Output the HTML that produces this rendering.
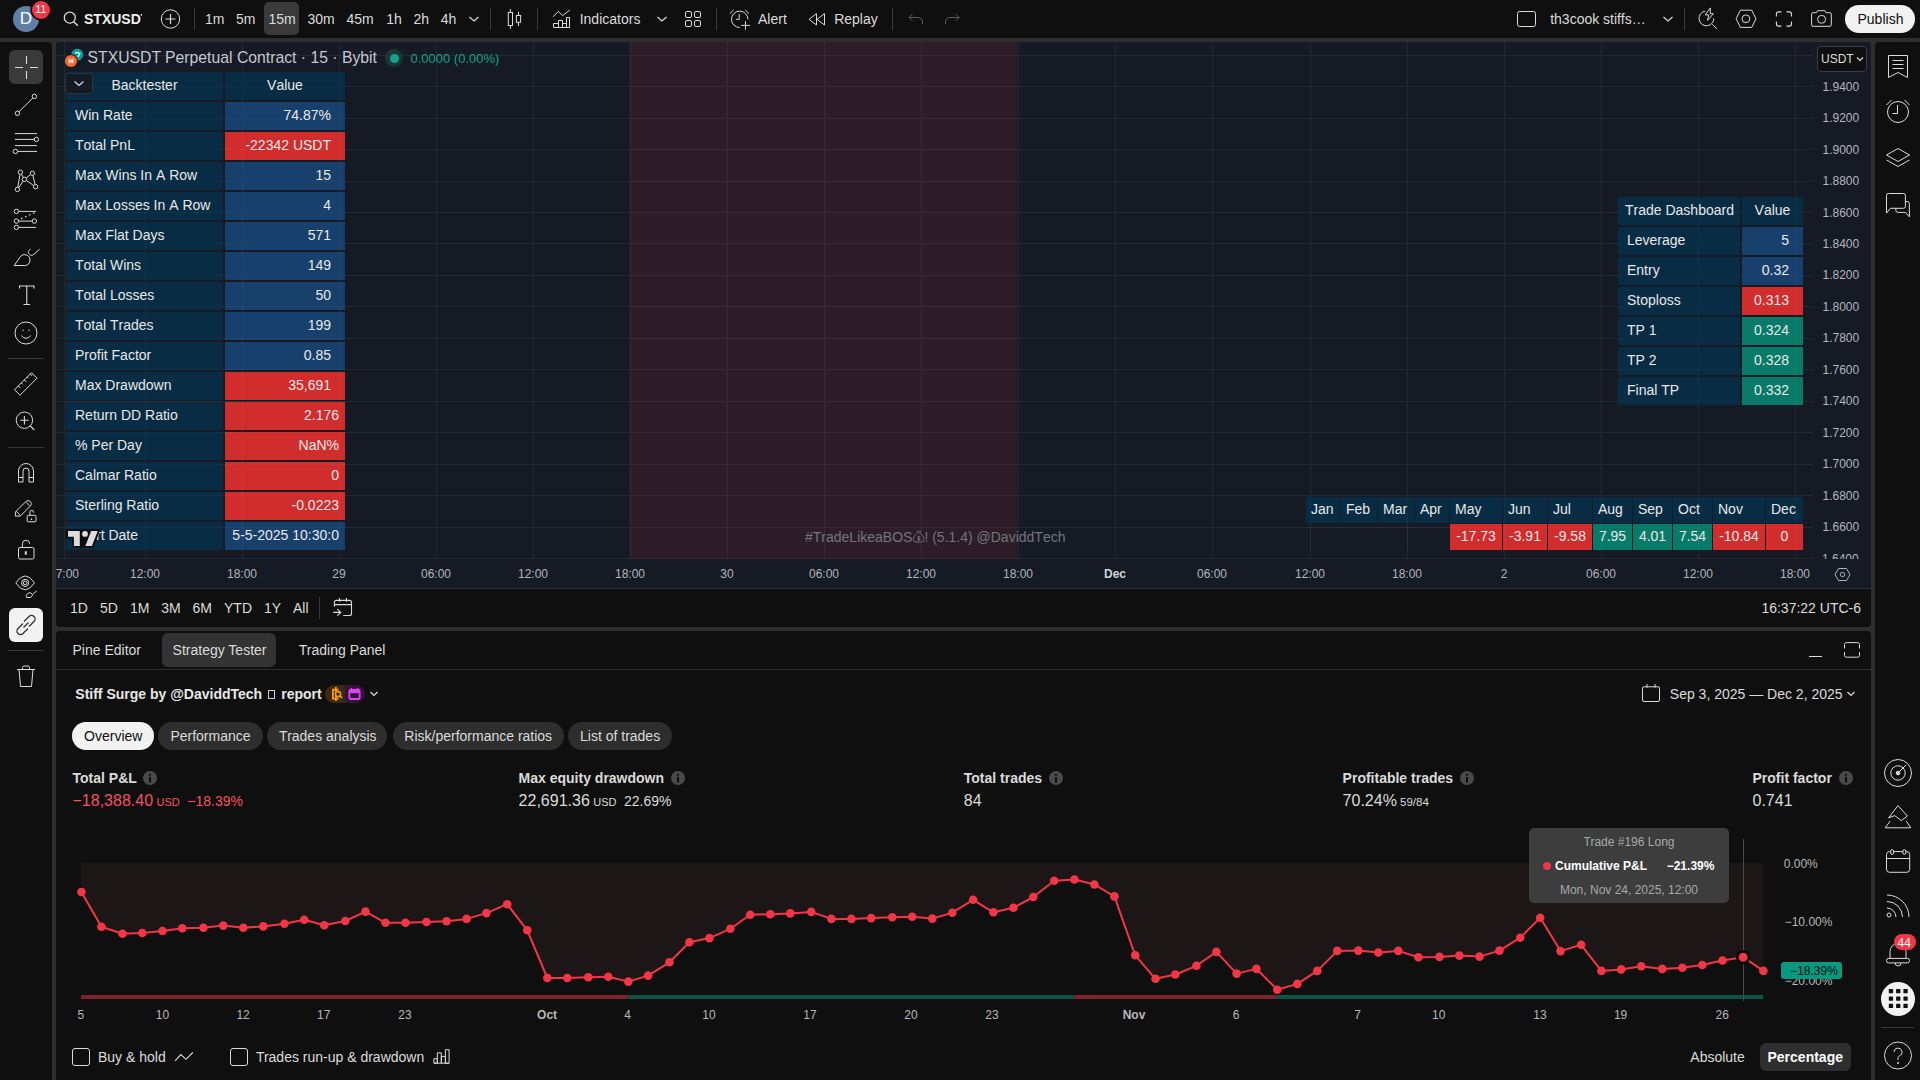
<!DOCTYPE html>
<html><head><meta charset="utf-8">
<style>
*{margin:0;padding:0;box-sizing:border-box}
html,body{width:1920px;height:1080px;overflow:hidden;background:#2e2e2e;font-family:"Liberation Sans",sans-serif;color:#dbdbdb}
.a{position:absolute}
.t{position:absolute;white-space:nowrap;line-height:1}
svg{position:absolute;overflow:visible}
.ic{fill:none;stroke:#dbdbdb;stroke-width:1}
</style></head><body>
<div class="a" style="left:0px;top:0px;width:1920px;height:38px;background:#0f0f0f;"></div>
<div class="a" style="left:12.8px;top:5.8px;width:26.4px;height:26.4px;border-radius:50%;background:#5f7fa6"></div>
<div class="t" style="left:19.7px;top:10.41px;font-size:17px;color:#ffffff;">D</div>
<div class="a" style="left:32.2px;top:0.8px;width:18px;height:18px;border-radius:50%;background:#f23645;box-shadow:0 0 0 1.6px #0f0f0f"></div>
<div class="t" style="left:35.3px;top:3.59px;font-size:11px;color:#ffffff;letter-spacing:-0.3px">11</div>
<svg class="ic" style="left:60px;top:10px;" width="20" height="20" viewBox="0 0 20 20"><circle cx="9.8" cy="7.7" r="5.5" stroke-width="1.3"/><path d="M13.8 11.8l4 3.9" stroke-width="1.4"/></svg>
<div class="a" style="left:84px;top:6px;width:58px;height:26px;overflow:hidden"><div class="t" style="left:0px;top:6.15px;font-size:14px;color:#f0f0f0;font-weight:700;">STXUSDT</div>
</div>
<svg class="ic" style="left:160px;top:9px;" width="22" height="22" viewBox="0 0 22 22"><circle cx="10.5" cy="10" r="9.2"/><path d="M10.5 5v10M5.5 10h10" stroke-width="1.2"/></svg>
<div class="a" style="left:194px;top:8px;width:1px;height:22px;background:#3a3a3a;"></div>
<div class="a" style="left:264px;top:2px;width:35px;height:33px;background:#3a3a3a;border-radius:5px;"></div>
<div class="t" style="left:205px;top:12.45px;font-size:14px;color:#dbdbdb;">1m</div>
<div class="t" style="left:236px;top:12.45px;font-size:14px;color:#dbdbdb;">5m</div>
<div class="t" style="left:268.5px;top:12.45px;font-size:14px;color:#dbdbdb;">15m</div>
<div class="t" style="left:307.5px;top:12.45px;font-size:14px;color:#dbdbdb;">30m</div>
<div class="t" style="left:346.5px;top:12.45px;font-size:14px;color:#dbdbdb;">45m</div>
<div class="t" style="left:386.3px;top:12.45px;font-size:14px;color:#dbdbdb;">1h</div>
<div class="t" style="left:413.4px;top:12.45px;font-size:14px;color:#dbdbdb;">2h</div>
<div class="t" style="left:440.7px;top:12.45px;font-size:14px;color:#dbdbdb;">4h</div>
<svg class="ic" style="left:468px;top:15px;" width="12" height="8" viewBox="0 0 12 8"><path d="M1.5 2l4.5 4 4.5-4" stroke-width="1.2"/></svg>
<div class="a" style="left:490px;top:8px;width:1px;height:22px;background:#3a3a3a;"></div>
<svg class="ic" style="left:505px;top:8px;" width="20" height="22" viewBox="0 0 20 22"><rect x="3.3" y="4.4" width="4.2" height="13.1"/><rect x="11.4" y="7.5" width="4.2" height="6.8"/><path d="M5.4 1v3.4M5.4 17.5v3.3M13.5 3.9v3.6M13.5 14.3V18"/></svg>
<div class="a" style="left:537px;top:8px;width:1px;height:22px;background:#3a3a3a;"></div>
<svg class="ic" style="left:550px;top:8px;" width="24" height="22" viewBox="0 0 24 22"><path d="M3.1 8.8L8.3 3.4l4.2 4.2 7.3-5.5"/><path d="M3.5 19.5V15.5H8.5V19.5M8.5 19.5V12.5H12.5V19.5M12.5 19.5V15.5H16.5V19.5M16.5 19.5V9.5H19.5V19.5ZM3.5 19.5H19.5"/></svg>
<div class="t" style="left:579.7px;top:12.45px;font-size:14px;color:#dbdbdb;">Indicators</div>
<svg class="ic" style="left:656px;top:15px;" width="12" height="8" viewBox="0 0 12 8"><path d="M1.5 2l4.5 4 4.5-4" stroke-width="1.2"/></svg>
<svg class="ic" style="left:684px;top:10px;" width="20" height="20" viewBox="0 0 20 20"><rect x="1.5" y="1.5" width="6" height="6" rx="1.5"/><rect x="10.5" y="1.5" width="6" height="6" rx="1.5"/><rect x="1.5" y="10.5" width="6" height="6" rx="1.5"/><rect x="10.5" y="10.5" width="6" height="6" rx="1.5"/></svg>
<div class="a" style="left:716px;top:8px;width:1px;height:22px;background:#3a3a3a;"></div>
<svg class="ic" style="left:728px;top:8px;" width="24" height="24" viewBox="0 0 24 24"><path d="M19.9 11.3A8.2 8.2 0 1 0 11.7 19.5"/><path d="M11.2 6.2V11.3H7.9M1.8 5.7L5.6 2M17.3 2L21 5.7M17.5 13.2V21.6M13.1 17.4H22"/></svg>
<div class="t" style="left:758px;top:12.45px;font-size:14px;color:#dbdbdb;">Alert</div>
<svg class="ic" style="left:806px;top:12px;" width="20" height="16" viewBox="0 0 20 16"><path d="M10.5 1.7L3 7.3 10.5 13ZM18.5 1.7L11 7.3 18.5 13Z"/></svg>
<div class="t" style="left:834.2px;top:12.45px;font-size:14px;color:#dbdbdb;">Replay</div>
<div class="a" style="left:892px;top:8px;width:1px;height:22px;background:#3a3a3a;"></div>
<svg class="ic" style="left:906px;top:12px;" width="18" height="14" viewBox="0 0 18 14"><path d="M3 5.5h9a4.5 4.5 0 0 1 4.5 4.5v2M6.5 2L3 5.5 6.5 9" stroke="#5d5d5d"/></svg>
<svg class="ic" style="left:944px;top:12px;" width="18" height="14" viewBox="0 0 18 14"><path d="M15 5.5H6a4.5 4.5 0 0 0-4.5 4.5v2M11.5 2L15 5.5 11.5 9" stroke="#5d5d5d"/></svg>
<div class="a" style="left:1517px;top:11px;width:19px;height:16px;border:1.2px solid #dbdbdb;border-radius:2.5px"></div>
<div class="t" style="left:1550.2px;top:12.45px;font-size:14px;color:#dbdbdb;">th3cook stiffs…</div>
<svg class="ic" style="left:1662px;top:15px;" width="12" height="8" viewBox="0 0 12 8"><path d="M1.5 2l4.5 4 4.5-4" stroke-width="1.2"/></svg>
<div class="a" style="left:1684px;top:8px;width:1px;height:22px;background:#3a3a3a;"></div>
<svg class="ic" style="left:1697px;top:7px;" width="22" height="23" viewBox="0 0 22 23"><path d="M8.1 4.1A7.4 7.4 0 1 0 16.8 11.4"/><path d="M13.3 .9L8.2 7.9h3.5l-1.1 5.5 5.8-6.7h-3.1z"/><path d="M15.3 17.3l4.7 4.7"/></svg>
<svg class="ic" style="left:1735px;top:9px;" width="22" height="20" viewBox="0 0 22 20"><path d="M1.1 9.8L5.4 1.2H16.7L21 9.8 16.7 18.4H5.4z"/><circle cx="10.9" cy="9.8" r="3.9"/></svg>
<svg class="ic" style="left:1775px;top:11px;" width="18" height="16" viewBox="0 0 18 16"><path d="M1.4 5.6V2.9a2 2 0 0 1 2-2H6.4M11.5 .9H14.5a2 2 0 0 1 2 2V5.6M16.5 10.4v2.7a2 2 0 0 1-2 2H11.5M6.4 15.1H3.4a2 2 0 0 1-2-2V10.4" stroke-width="1.1"/></svg>
<svg class="ic" style="left:1810px;top:10px;" width="23" height="17" viewBox="0 0 23 17"><path d="M1.6 4.2a1.5 1.5 0 0 1 1.5-1.5H6.5L7.5 .7h7.5l1 2h3.8a1.5 1.5 0 0 1 1.5 1.5v10.6a1.5 1.5 0 0 1-1.5 1.5H3.1a1.5 1.5 0 0 1-1.5-1.5z"/><circle cx="11.6" cy="9.3" r="4"/></svg>
<div class="a" style="left:1845px;top:5px;width:70px;height:28px;border-radius:14px;background:#f2f2f2"></div>
<div class="t" style="left:1857.5px;top:12.45px;font-size:14px;color:#0f0f0f;">Publish</div>
<div class="a" style="left:0px;top:42px;width:52px;height:1038px;background:#0f0f0f;border-top-right-radius:4px;"></div>
<div class="a" style="left:1875px;top:42px;width:45px;height:1038px;background:#0f0f0f;border-top-left-radius:4px;"></div>
<div class="a" style="left:9px;top:50px;width:34px;height:34px;background:#3a3a3a;border-radius:6px;"></div>
<svg class="ic" style="left:9px;top:50px;" width="34" height="34" viewBox="0 0 34 34"><path d="M17.5 6v8M17.5 21v8M6 17.5h8M21 17.5h8" stroke-width="1.1"/></svg>
<svg class="ic" style="left:9px;top:88px;" width="34" height="34" viewBox="0 0 34 34"><circle cx="8.4" cy="25.3" r="2.2"/><circle cx="25.4" cy="8.4" r="2.2"/><path d="M10 23.7L23.8 10"/></svg>
<svg class="ic" style="left:9px;top:126px;" width="34" height="34" viewBox="0 0 34 34"><path d="M6 7.6h22M6 13.4h19.8M8.6 25.4H28M6 19.6h22"/><circle cx="27.4" cy="13.4" r="2.2"/><circle cx="6.4" cy="25.4" r="2.2"/></svg>
<svg class="ic" style="left:9px;top:164px;" width="34" height="34" viewBox="0 0 34 34"><circle cx="11.4" cy="8.2" r="2.2"/><circle cx="23.4" cy="9.3" r="2.2"/><circle cx="15.4" cy="15.4" r="2.2"/><circle cx="8.4" cy="25.4" r="2.2"/><circle cx="26.6" cy="22.7" r="2.2"/><path d="M11 10.4L8.8 23.2M9.8 23.6l4.2-6.3M17.2 14l4.4-3.5M23.9 11.5l2.2 9M17.4 16.5l7.2 5M12.5 10.2l1.8 3.2"/></svg>
<svg class="ic" style="left:9px;top:202px;" width="34" height="34" viewBox="0 0 34 34"><circle cx="7.4" cy="9.4" r="2.2"/><circle cx="7.4" cy="19.1" r="2.2"/><circle cx="25.4" cy="19.1" r="2.2"/><circle cx="7.4" cy="25.4" r="2.2"/><path d="M9.6 9.4H27M9.6 19.1h13.6M9.6 25.4H27"/><path d="M12 16.8l1.5-.7M16 15l1.5-.7M20 13.2l1.5-.7M24 11.4l1.5-.7" stroke-width="1.2"/></svg>
<svg class="ic" style="left:9px;top:240px;" width="34" height="34" viewBox="0 0 34 34"><path d="M5.2 25.5H15.6A5.4 5.4 0 1 0 10.7 17.8Z"/><path d="M21.6 9.2C19.3 10.3 18.6 12.6 20.3 14.4 21.3 15.5 23 15.8 24.3 14.8L30.6 9.2"/></svg>
<svg class="ic" style="left:9px;top:278px;" width="34" height="34" viewBox="0 0 34 34"><path d="M10.5 10.5v-2.5h14.5v2.5M17.75 8v18.5M14.5 26.5h6.5" stroke-width="1.1"/></svg>
<svg class="ic" style="left:9px;top:316px;" width="34" height="34" viewBox="0 0 34 34"><circle cx="17" cy="17" r="11"/><path d="M12.5 19.5a5 5 0 0 0 9 0"/><circle cx="14" cy="14.3" r=".7" fill="#dbdbdb" stroke="none"/><circle cx="20" cy="14.3" r=".7" fill="#dbdbdb" stroke="none"/></svg>
<div class="a" style="left:8px;top:358px;width:36px;height:1px;background:#3a3a3a;"></div>
<svg class="ic" style="left:9px;top:366px;" width="34" height="34" viewBox="0 0 34 34"><path d="M5.5 23.7L22.5 6.7l5.5 5.5-17 17z"/><path d="M9.3 20l2 2M12.3 17l1.3 1.3M15.3 14l2 2M18.3 11l1.3 1.3M21.3 8l2 2"/></svg>
<svg class="ic" style="left:9px;top:404px;" width="34" height="34" viewBox="0 0 34 34"><circle cx="15.4" cy="16.2" r="8.2"/><path d="M21.3 22l4 4M15.4 12v8.4M11.2 16.2h8.4" stroke-width="1.1"/></svg>
<div class="a" style="left:8px;top:447px;width:36px;height:1px;background:#3a3a3a;"></div>
<svg class="ic" style="left:9px;top:456px;" width="34" height="34" viewBox="0 0 34 34"><path d="M9.5 26V15a7.5 7.5 0 0 1 15 0v11h-4.5V15a3 3 0 0 0-6 0v11z"/><path d="M9.5 21.5H14M20 21.5h4.5"/></svg>
<svg class="ic" style="left:9px;top:494px;" width="34" height="34" viewBox="0 0 34 34"><path d="M6.4 18L17.1 7.3a3.2 3.2 0 0 1 4.5 4.5L11.3 22.1H6.4zM7.2 17.3l4.2 4.2M17.1 8.4l3.4 3.4"/><rect x="18.2" y="21.3" width="8.8" height="6.5" rx="1"/><path d="M20.9 21.3v-3.1a1.85 1.85 0 0 1 3.7 0v.6"/><path d="M22.5 24.4v1.6" stroke-width="1.3"/></svg>
<svg class="ic" style="left:9px;top:532px;" width="34" height="34" viewBox="0 0 34 34"><rect x="9.5" y="15.5" width="15.5" height="11.5" rx="1.5"/><path d="M13.4 15.5v-3.7a3.6 3.6 0 0 1 7.2 0v.2"/><path d="M16.8 19.3v3.4" stroke-width="2"/></svg>
<svg class="ic" style="left:9px;top:570px;" width="34" height="34" viewBox="0 0 34 34"><path d="M6.8 12.9Q16.15 -1 25.5 12.9Q16.15 26.8 6.8 12.9z"/><circle cx="16.15" cy="12.9" r="3.6"/><circle cx="16.15" cy="12.9" r="1.9"/><path d="M17.5 27.5h4a3.5 3.5 0 0 0 2-3l-1.5-1.5a3.5 3.5 0 0 0-4.5 4.5zM24 24l3.8-3.2"/></svg>
<div class="a" style="left:9px;top:608px;width:34px;height:34px;background:#f2f2f2;border-radius:6px;"></div>
<svg class="ic" style="left:9px;top:608px;" width="34" height="34" viewBox="0 0 34 34"><path d="M14 15.5l-5 5a3.5 3.5 0 0 0 5 5l5-5M20 18.5l5-5a3.5 3.5 0 0 0-5-5l-5 5M14.5 19.5l5-5" stroke="#333" stroke-width="1.3"/></svg>
<div class="a" style="left:8px;top:650px;width:36px;height:1px;background:#3a3a3a;"></div>
<svg class="ic" style="left:9px;top:660px;" width="34" height="34" viewBox="0 0 34 34"><path d="M8 9.5h18M13.5 9.5V7.5a1.5 1.5 0 0 1 1.5-1.5h4a1.5 1.5 0 0 1 1.5 1.5v2M10 9.5l1.5 17h11l1.5-17"/></svg>
<svg class="ic" style="left:1881px;top:50px;" width="34" height="34" viewBox="0 0 34 34"><path d="M7.5 5.5h19v22l-9.5-5-9.5 5z"/><path d="M11.5 10.5h11M11.5 14.5h11M11.5 18.5h11"/></svg>
<svg class="ic" style="left:1881px;top:95px;" width="34" height="34" viewBox="0 0 34 34"><circle cx="17" cy="17" r="10.5"/><path d="M16.5 10v8.5h-5M5.5 10l5-5M28.5 10l-5-5"/></svg>
<svg class="ic" style="left:1881px;top:140px;" width="34" height="34" viewBox="0 0 34 34"><path d="M5.5 15l11.5-6.5 11.5 6.5-11.5 6.5z"/><path d="M5.5 20l11.5 6.5 11.5-6.5"/></svg>
<svg class="ic" style="left:1881px;top:188px;" width="34" height="34" viewBox="0 0 34 34"><path d="M5.5 25.1V7.5a2 2 0 0 1 2-2h14.9a2 2 0 0 1 2 2v10.8a2 2 0 0 1-2 2H9.4Z"/><path d="M14.9 20.3v2.1a2 2 0 0 0 2 2h7.7l3.8 4.5V15.5a2 2 0 0 0-2-2h-2"/></svg>
<svg class="ic" style="left:1881px;top:756px;" width="34" height="34" viewBox="0 0 34 34"><circle cx="17" cy="17" r="13.5"/><circle cx="17" cy="17" r="7.2"/><circle cx="17" cy="17" r="1.8" fill="#dbdbdb"/><path d="M17 17l8-8"/></svg>
<svg class="ic" style="left:1881px;top:800px;" width="34" height="34" viewBox="0 0 34 34"><path d="M17 5.6L26.4 16.1 20.3 20.6 13.7 15.6 7.6 17.8Z"/><path d="M9.2 21.1L4.2 27.8H29.8L25.3 21.1"/></svg>
<svg class="ic" style="left:1881px;top:845px;" width="34" height="34" viewBox="0 0 34 34"><rect x="5.5" y="6.6" width="23.2" height="20.7" rx="3"/><path d="M5.5 13.5h23.2"/><rect x="9.7" y="4.7" width="2.9" height="4.7" rx="1.4" fill="#0f0f0f"/><rect x="21.9" y="4.7" width="2.9" height="4.7" rx="1.4" fill="#0f0f0f"/></svg>
<svg class="ic" style="left:1881px;top:889px;" width="34" height="34" viewBox="0 0 34 34"><circle cx="8" cy="26" r="2"/><path d="M6 19a9 9 0 0 1 9 9M6 12.5a15.5 15.5 0 0 1 15.5 15.5M6 6a22 22 0 0 1 22 22"/></svg>
<svg class="ic" style="left:1881px;top:935px;" width="34" height="34" viewBox="0 0 34 34"><path d="M9 23.4V16.5a8 8 0 0 1 16 0v6.9"/><rect x="5.5" y="23.4" width="23" height="4.5" rx="2.2"/><path d="M14 27.9a3 3 0 0 0 6 0"/></svg>
<div class="a" style="left:1894px;top:934px;width:22px;height:16px;border-radius:8px;background:#f23645"></div>
<div class="t" style="left:1897.5px;top:936.84px;font-size:12px;color:#ffffff;">44</div>
<div class="a" style="left:1881px;top:982px;width:34px;height:34px;border-radius:50%;background:#f2f2f2"></div>
<svg class="ic" style="left:1881px;top:982px;" width="34" height="34" viewBox="0 0 34 34"><rect x="7.8" y="7.0" width="4.3" height="4.3" rx="0.6" fill="#0f0f0f" stroke="none"/><rect x="7.8" y="14.4" width="4.3" height="4.3" rx="0.6" fill="#0f0f0f" stroke="none"/><rect x="7.8" y="21.8" width="4.3" height="4.3" rx="0.6" fill="#0f0f0f" stroke="none"/><rect x="15.1" y="7.0" width="4.3" height="4.3" rx="0.6" fill="#0f0f0f" stroke="none"/><rect x="15.1" y="14.4" width="4.3" height="4.3" rx="0.6" fill="#0f0f0f" stroke="none"/><rect x="15.1" y="21.8" width="4.3" height="4.3" rx="0.6" fill="#0f0f0f" stroke="none"/><rect x="22.4" y="7.0" width="4.3" height="4.3" rx="0.6" fill="#0f0f0f" stroke="none"/><rect x="22.4" y="14.4" width="4.3" height="4.3" rx="0.6" fill="#0f0f0f" stroke="none"/><rect x="22.4" y="21.8" width="4.3" height="4.3" rx="0.6" fill="#0f0f0f" stroke="none"/></svg>
<div class="a" style="left:1881px;top:1027px;width:33px;height:1px;background:#3a3a3a;"></div>
<svg class="ic" style="left:1881px;top:1039px;" width="34" height="34" viewBox="0 0 34 34"><circle cx="17" cy="16.5" r="13.5"/><path d="M13 13a4 4 0 1 1 5.5 3.8c-1 .5-1.5 1.2-1.5 2.5v1.7"/><circle cx="17" cy="24" r="1" fill="#dbdbdb" stroke="none"/></svg>
<div class="a" style="left:56px;top:42px;width:1815px;height:585px;background:#0f0f0f;border-radius:4px;overflow:hidden;"></div>
<div class="a" style="left:56px;top:42px;width:1815px;height:546px;background:#161a25;border-top-left-radius:4px;border-top-right-radius:4px;"></div>
<div class="a" style="left:64px;top:42px;width:1px;height:517px;background:#242833;"></div>
<div class="a" style="left:145px;top:42px;width:1px;height:517px;background:#242833;"></div>
<div class="a" style="left:242px;top:42px;width:1px;height:517px;background:#242833;"></div>
<div class="a" style="left:339px;top:42px;width:1px;height:517px;background:#242833;"></div>
<div class="a" style="left:436px;top:42px;width:1px;height:517px;background:#242833;"></div>
<div class="a" style="left:533px;top:42px;width:1px;height:517px;background:#242833;"></div>
<div class="a" style="left:630px;top:42px;width:1px;height:517px;background:#242833;"></div>
<div class="a" style="left:727px;top:42px;width:1px;height:517px;background:#242833;"></div>
<div class="a" style="left:824px;top:42px;width:1px;height:517px;background:#242833;"></div>
<div class="a" style="left:921px;top:42px;width:1px;height:517px;background:#242833;"></div>
<div class="a" style="left:1018px;top:42px;width:1px;height:517px;background:#242833;"></div>
<div class="a" style="left:1115px;top:42px;width:1px;height:517px;background:#242833;"></div>
<div class="a" style="left:1212px;top:42px;width:1px;height:517px;background:#242833;"></div>
<div class="a" style="left:1310px;top:42px;width:1px;height:517px;background:#242833;"></div>
<div class="a" style="left:1407px;top:42px;width:1px;height:517px;background:#242833;"></div>
<div class="a" style="left:1504px;top:42px;width:1px;height:517px;background:#242833;"></div>
<div class="a" style="left:1601px;top:42px;width:1px;height:517px;background:#242833;"></div>
<div class="a" style="left:1698px;top:42px;width:1px;height:517px;background:#242833;"></div>
<div class="a" style="left:1795px;top:42px;width:1px;height:517px;background:#242833;"></div>
<div class="a" style="left:56px;top:55px;width:1757px;height:1px;background:#242833;"></div>
<div class="a" style="left:56px;top:86px;width:1757px;height:1px;background:#242833;"></div>
<div class="a" style="left:56px;top:118px;width:1757px;height:1px;background:#242833;"></div>
<div class="a" style="left:56px;top:149px;width:1757px;height:1px;background:#242833;"></div>
<div class="a" style="left:56px;top:181px;width:1757px;height:1px;background:#242833;"></div>
<div class="a" style="left:56px;top:212px;width:1757px;height:1px;background:#242833;"></div>
<div class="a" style="left:56px;top:243px;width:1757px;height:1px;background:#242833;"></div>
<div class="a" style="left:56px;top:275px;width:1757px;height:1px;background:#242833;"></div>
<div class="a" style="left:56px;top:306px;width:1757px;height:1px;background:#242833;"></div>
<div class="a" style="left:56px;top:338px;width:1757px;height:1px;background:#242833;"></div>
<div class="a" style="left:56px;top:369px;width:1757px;height:1px;background:#242833;"></div>
<div class="a" style="left:56px;top:401px;width:1757px;height:1px;background:#242833;"></div>
<div class="a" style="left:56px;top:432px;width:1757px;height:1px;background:#242833;"></div>
<div class="a" style="left:56px;top:464px;width:1757px;height:1px;background:#242833;"></div>
<div class="a" style="left:56px;top:495px;width:1757px;height:1px;background:#242833;"></div>
<div class="a" style="left:56px;top:527px;width:1757px;height:1px;background:#242833;"></div>
<div class="a" style="left:56px;top:558px;width:1757px;height:1px;background:#242833;"></div>
<div class="a" style="left:630px;top:42px;width:387px;height:517px;background:rgba(242,54,69,0.1);"></div>
<div class="t" style="left:1822.5px;top:80.74px;font-size:12px;color:#b2b5be;font-kerning:none;">1.9400</div>
<div class="t" style="left:1822.5px;top:112.19px;font-size:12px;color:#b2b5be;font-kerning:none;">1.9200</div>
<div class="t" style="left:1822.5px;top:143.64px;font-size:12px;color:#b2b5be;font-kerning:none;">1.9000</div>
<div class="t" style="left:1822.5px;top:175.09px;font-size:12px;color:#b2b5be;font-kerning:none;">1.8800</div>
<div class="t" style="left:1822.5px;top:206.54px;font-size:12px;color:#b2b5be;font-kerning:none;">1.8600</div>
<div class="t" style="left:1822.5px;top:237.99px;font-size:12px;color:#b2b5be;font-kerning:none;">1.8400</div>
<div class="t" style="left:1822.5px;top:269.44px;font-size:12px;color:#b2b5be;font-kerning:none;">1.8200</div>
<div class="t" style="left:1822.5px;top:300.89px;font-size:12px;color:#b2b5be;font-kerning:none;">1.8000</div>
<div class="t" style="left:1822.5px;top:332.34px;font-size:12px;color:#b2b5be;font-kerning:none;">1.7800</div>
<div class="t" style="left:1822.5px;top:363.79px;font-size:12px;color:#b2b5be;font-kerning:none;">1.7600</div>
<div class="t" style="left:1822.5px;top:395.24px;font-size:12px;color:#b2b5be;font-kerning:none;">1.7400</div>
<div class="t" style="left:1822.5px;top:426.69px;font-size:12px;color:#b2b5be;font-kerning:none;">1.7200</div>
<div class="t" style="left:1822.5px;top:458.14px;font-size:12px;color:#b2b5be;font-kerning:none;">1.7000</div>
<div class="t" style="left:1822.5px;top:489.59px;font-size:12px;color:#b2b5be;font-kerning:none;">1.6800</div>
<div class="t" style="left:1822.5px;top:521.04px;font-size:12px;color:#b2b5be;font-kerning:none;">1.6600</div>
<div class="a" style="left:1813px;top:550px;width:58px;height:9px;overflow:hidden"><div class="t" style="left:9px;top:3.14px;font-size:12px;color:#b2b5be;">1.6400</div>
</div>
<div class="a" style="left:56px;top:588px;width:1815px;height:1px;background:#2a2e39;"></div>
<div class="a" style="left:56px;top:559px;width:1757px;height:29px;overflow:hidden"><div class="t" style="left:-292px;width:600px;text-align:center;top:8.84px;font-size:12px;color:#b2b5be;">07:00</div>
<div class="t" style="left:-211px;width:600px;text-align:center;top:8.84px;font-size:12px;color:#b2b5be;">12:00</div>
<div class="t" style="left:-114px;width:600px;text-align:center;top:8.84px;font-size:12px;color:#b2b5be;">18:00</div>
<div class="t" style="left:-17px;width:600px;text-align:center;top:8.84px;font-size:12px;color:#b2b5be;">29</div>
<div class="t" style="left:80px;width:600px;text-align:center;top:8.84px;font-size:12px;color:#b2b5be;">06:00</div>
<div class="t" style="left:177px;width:600px;text-align:center;top:8.84px;font-size:12px;color:#b2b5be;">12:00</div>
<div class="t" style="left:274px;width:600px;text-align:center;top:8.84px;font-size:12px;color:#b2b5be;">18:00</div>
<div class="t" style="left:371px;width:600px;text-align:center;top:8.84px;font-size:12px;color:#b2b5be;">30</div>
<div class="t" style="left:468px;width:600px;text-align:center;top:8.84px;font-size:12px;color:#b2b5be;">06:00</div>
<div class="t" style="left:565px;width:600px;text-align:center;top:8.84px;font-size:12px;color:#b2b5be;">12:00</div>
<div class="t" style="left:662px;width:600px;text-align:center;top:8.84px;font-size:12px;color:#b2b5be;">18:00</div>
<div class="t" style="left:759px;width:600px;text-align:center;top:8.84px;font-size:12px;color:#d1d4dc;font-weight:700;">Dec</div>
<div class="t" style="left:856px;width:600px;text-align:center;top:8.84px;font-size:12px;color:#b2b5be;">06:00</div>
<div class="t" style="left:954px;width:600px;text-align:center;top:8.84px;font-size:12px;color:#b2b5be;">12:00</div>
<div class="t" style="left:1051px;width:600px;text-align:center;top:8.84px;font-size:12px;color:#b2b5be;">18:00</div>
<div class="t" style="left:1148px;width:600px;text-align:center;top:8.84px;font-size:12px;color:#b2b5be;">2</div>
<div class="t" style="left:1245px;width:600px;text-align:center;top:8.84px;font-size:12px;color:#b2b5be;">06:00</div>
<div class="t" style="left:1342px;width:600px;text-align:center;top:8.84px;font-size:12px;color:#b2b5be;">12:00</div>
<div class="t" style="left:1439px;width:600px;text-align:center;top:8.84px;font-size:12px;color:#b2b5be;">18:00</div>
</div>
<svg class="ic" style="left:1834px;top:567px;stroke:#b2b5be" width="17" height="15" viewBox="0 0 17 15"><path d="M4.5 1.5h8l3.5 6-3.5 6h-8L1 7.5z"/><circle cx="8.5" cy="7.5" r="2.2"/></svg>
<div class="a" style="left:1817px;top:46px;width:50px;height:26px;border:1px solid #3a3d45;border-radius:4px;background:#0f0f0f"></div>
<div class="t" style="left:1821px;top:53.34px;font-size:12px;color:#dbdbdb;">USDT</div>
<svg class="ic" style="left:1856px;top:56px;" width="8" height="6" viewBox="0 0 8 6"><path d="M1 1.5l3 3 3-3" stroke-width="1.2"/></svg>
<svg class="" style="left:62px;top:46px;" width="24" height="24" viewBox="0 0 24 24"><circle cx="15.2" cy="8.76" r="6" fill="#0c9f9a"/><path d="M13.2 7.2q2.6-1.6 4.6.6l-2 3.2" stroke="#e0fff8" stroke-width="1.4" fill="none"/><circle cx="9" cy="15" r="7" fill="#161a25"/><circle cx="9" cy="15" r="6.1" fill="#f26934"/><path d="M7 13l4 4M11 13l-4 4M6.2 15h5.6" stroke="#ffd9cc" stroke-width="1.5"/></svg>
<div class="t" style="left:87.5px;top:49.87px;font-size:15.75px;color:#c5c8d0;">STXUSDT Perpetual Contract · 15 · Bybit</div>
<div class="a" style="left:385px;top:49px;width:18px;height:18px;border-radius:50%;background:#1b3735"></div>
<div class="a" style="left:389.5px;top:53.5px;width:9px;height:9px;border-radius:50%;background:#0ea58a"></div>
<div class="t" style="left:410.5px;top:51.50px;font-size:13px;color:#0ca487;">0.0000 (0.00%)</div>
<div class="t" style="left:805px;top:529.95px;font-size:14px;color:#75737d;font-kerning:none;">#TradeLikeaBOS<svg style="position:static;display:inline-block;vertical-align:-1px;margin:0 0 0 0.5px" width="11.5" height="13" viewBox="0 0 12 13"><path d="M5.2 3.6L4.3 1.6 5.6.6 6.6 1.5 7.8 1 7.3 3.6M3.5 4.2C0.8 5.6 -.6 9.5 1.2 11.6 2.5 12.8 9.3 12.8 10.8 11.6 12.4 9.6 11.3 5.6 8 4.2" fill="none" stroke="#75727d" stroke-width="1"/><path d="M7.4 6.8C6.6 6.2 4.8 6.4 5 7.6 5.2 8.6 7.6 8.3 7.3 9.6 7.1 10.6 5.2 10.6 4.4 9.9M6 5.8v5.8" fill="none" stroke="#75727d" stroke-width="1"/></svg>! (5.1.4) @DaviddTech</div>
<div class="t" style="left:70px;top:601.15px;font-size:14px;color:#dbdbdb;">1D</div>
<div class="t" style="left:100px;top:601.15px;font-size:14px;color:#dbdbdb;">5D</div>
<div class="t" style="left:130px;top:601.15px;font-size:14px;color:#dbdbdb;">1M</div>
<div class="t" style="left:161.3px;top:601.15px;font-size:14px;color:#dbdbdb;">3M</div>
<div class="t" style="left:192.5px;top:601.15px;font-size:14px;color:#dbdbdb;">6M</div>
<div class="t" style="left:224px;top:601.15px;font-size:14px;color:#dbdbdb;">YTD</div>
<div class="t" style="left:264px;top:601.15px;font-size:14px;color:#dbdbdb;">1Y</div>
<div class="t" style="left:293px;top:601.15px;font-size:14px;color:#dbdbdb;">All</div>
<div class="a" style="left:319px;top:597px;width:1px;height:22px;background:#3a3a3a;"></div>
<svg class="ic" style="left:332px;top:597px;" width="22" height="22" viewBox="0 0 22 22"><path d="M2.4 9.7V5.4a2 2 0 0 1 2-2h13.1a2 2 0 0 1 2 2v11.1a2 2 0 0 1-2 2h-6.3M2.4 7.6h17.1M7.5 1v3.8M14.4 1v3.8M1.1 15.4h7.7M5.3 12.2l3.5 3.2-3.5 3.3" stroke-width="1.1"/></svg>
<div class="t" style="right:59px;top:600.75px;font-size:14px;color:#dbdbdb;text-align:right;">16:37:22 UTC-6</div>
<div class="a" style="left:66px;top:72px;width:157px;height:28px;background:#072c44;"></div>
<div class="a" style="left:225px;top:72px;width:120px;height:28px;background:#072c44;"></div>
<div class="a" style="left:65px;top:73px;width:28px;height:21px;border:1px solid #2e3340;border-radius:3px;background:#131a24"></div>
<svg class="ic" style="left:73px;top:80px;" width="12" height="8" viewBox="0 0 12 8"><path d="M1.5 1.5l4.5 4 4.5-4" stroke-width="1.2"/></svg>
<div class="t" style="left:-155.5px;width:600px;text-align:center;top:78.05px;font-size:14px;color:#e8e8e8;font-kerning:none;">Backtester</div>
<div class="t" style="left:-15px;width:600px;text-align:center;top:78.05px;font-size:14px;color:#e8e8e8;font-kerning:none;">Value</div>
<div class="a" style="left:66px;top:102px;width:157px;height:28px;background:#072c44;"></div>
<div class="a" style="left:225px;top:102px;width:120px;height:28px;background:#18406c;"></div>
<div class="t" style="left:75px;top:108.25px;font-size:14px;color:#e8e8e8;font-kerning:none;">Win Rate</div>
<div class="t" style="right:1589px;top:108.25px;font-size:14px;color:#e8e8e8;text-align:right;font-kerning:none;">74.87%</div>
<div class="a" style="left:66px;top:132px;width:157px;height:28px;background:#072c44;"></div>
<div class="a" style="left:225px;top:132px;width:120px;height:28px;background:#d22d2d;"></div>
<div class="t" style="left:75px;top:138.25px;font-size:14px;color:#e8e8e8;font-kerning:none;">Total PnL</div>
<div class="t" style="right:1589px;top:138.25px;font-size:14px;color:#e8e8e8;text-align:right;font-kerning:none;">-22342 USDT</div>
<div class="a" style="left:66px;top:162px;width:157px;height:28px;background:#072c44;"></div>
<div class="a" style="left:225px;top:162px;width:120px;height:28px;background:#18406c;"></div>
<div class="t" style="left:75px;top:168.25px;font-size:14px;color:#e8e8e8;font-kerning:none;">Max Wins In A Row</div>
<div class="t" style="right:1589px;top:168.25px;font-size:14px;color:#e8e8e8;text-align:right;font-kerning:none;">15</div>
<div class="a" style="left:66px;top:192px;width:157px;height:28px;background:#072c44;"></div>
<div class="a" style="left:225px;top:192px;width:120px;height:28px;background:#18406c;"></div>
<div class="t" style="left:75px;top:198.25px;font-size:14px;color:#e8e8e8;font-kerning:none;">Max Losses In A Row</div>
<div class="t" style="right:1589px;top:198.25px;font-size:14px;color:#e8e8e8;text-align:right;font-kerning:none;">4</div>
<div class="a" style="left:66px;top:222px;width:157px;height:28px;background:#072c44;"></div>
<div class="a" style="left:225px;top:222px;width:120px;height:28px;background:#18406c;"></div>
<div class="t" style="left:75px;top:228.25px;font-size:14px;color:#e8e8e8;font-kerning:none;">Max Flat Days</div>
<div class="t" style="right:1589px;top:228.25px;font-size:14px;color:#e8e8e8;text-align:right;font-kerning:none;">571</div>
<div class="a" style="left:66px;top:252px;width:157px;height:28px;background:#072c44;"></div>
<div class="a" style="left:225px;top:252px;width:120px;height:28px;background:#18406c;"></div>
<div class="t" style="left:75px;top:258.25px;font-size:14px;color:#e8e8e8;font-kerning:none;">Total Wins</div>
<div class="t" style="right:1589px;top:258.25px;font-size:14px;color:#e8e8e8;text-align:right;font-kerning:none;">149</div>
<div class="a" style="left:66px;top:282px;width:157px;height:28px;background:#072c44;"></div>
<div class="a" style="left:225px;top:282px;width:120px;height:28px;background:#18406c;"></div>
<div class="t" style="left:75px;top:288.25px;font-size:14px;color:#e8e8e8;font-kerning:none;">Total Losses</div>
<div class="t" style="right:1589px;top:288.25px;font-size:14px;color:#e8e8e8;text-align:right;font-kerning:none;">50</div>
<div class="a" style="left:66px;top:312px;width:157px;height:28px;background:#072c44;"></div>
<div class="a" style="left:225px;top:312px;width:120px;height:28px;background:#18406c;"></div>
<div class="t" style="left:75px;top:318.25px;font-size:14px;color:#e8e8e8;font-kerning:none;">Total Trades</div>
<div class="t" style="right:1589px;top:318.25px;font-size:14px;color:#e8e8e8;text-align:right;font-kerning:none;">199</div>
<div class="a" style="left:66px;top:342px;width:157px;height:28px;background:#072c44;"></div>
<div class="a" style="left:225px;top:342px;width:120px;height:28px;background:#18406c;"></div>
<div class="t" style="left:75px;top:348.25px;font-size:14px;color:#e8e8e8;font-kerning:none;">Profit Factor</div>
<div class="t" style="right:1589px;top:348.25px;font-size:14px;color:#e8e8e8;text-align:right;font-kerning:none;">0.85</div>
<div class="a" style="left:66px;top:372px;width:157px;height:28px;background:#072c44;"></div>
<div class="a" style="left:225px;top:372px;width:120px;height:28px;background:#d22d2d;"></div>
<div class="t" style="left:75px;top:378.25px;font-size:14px;color:#e8e8e8;font-kerning:none;">Max Drawdown</div>
<div class="t" style="right:1589px;top:378.25px;font-size:14px;color:#e8e8e8;text-align:right;font-kerning:none;">35,691</div>
<div class="a" style="left:66px;top:402px;width:157px;height:28px;background:#072c44;"></div>
<div class="a" style="left:225px;top:402px;width:120px;height:28px;background:#d22d2d;"></div>
<div class="t" style="left:75px;top:408.25px;font-size:14px;color:#e8e8e8;font-kerning:none;">Return DD Ratio</div>
<div class="t" style="right:1581px;top:408.25px;font-size:14px;color:#e8e8e8;text-align:right;font-kerning:none;">2.176</div>
<div class="a" style="left:66px;top:432px;width:157px;height:28px;background:#072c44;"></div>
<div class="a" style="left:225px;top:432px;width:120px;height:28px;background:#d22d2d;"></div>
<div class="t" style="left:75px;top:438.25px;font-size:14px;color:#e8e8e8;font-kerning:none;">% Per Day</div>
<div class="t" style="right:1581px;top:438.25px;font-size:14px;color:#e8e8e8;text-align:right;font-kerning:none;">NaN%</div>
<div class="a" style="left:66px;top:462px;width:157px;height:28px;background:#072c44;"></div>
<div class="a" style="left:225px;top:462px;width:120px;height:28px;background:#d22d2d;"></div>
<div class="t" style="left:75px;top:468.25px;font-size:14px;color:#e8e8e8;font-kerning:none;">Calmar Ratio</div>
<div class="t" style="right:1581px;top:468.25px;font-size:14px;color:#e8e8e8;text-align:right;font-kerning:none;">0</div>
<div class="a" style="left:66px;top:492px;width:157px;height:28px;background:#072c44;"></div>
<div class="a" style="left:225px;top:492px;width:120px;height:28px;background:#d22d2d;"></div>
<div class="t" style="left:75px;top:498.25px;font-size:14px;color:#e8e8e8;font-kerning:none;">Sterling Ratio</div>
<div class="t" style="right:1581px;top:498.25px;font-size:14px;color:#e8e8e8;text-align:right;font-kerning:none;">-0.0223</div>
<div class="a" style="left:66px;top:522px;width:157px;height:28px;background:#072c44;"></div>
<div class="a" style="left:225px;top:522px;width:120px;height:28px;background:#18406c;"></div>
<div class="t" style="left:75px;top:528.25px;font-size:14px;color:#e8e8e8;font-kerning:none;">Start Date</div>
<div class="t" style="right:1581px;top:528.25px;font-size:14px;color:#e8e8e8;text-align:right;font-kerning:none;">5-5-2025 10:30:0</div>
<svg class="" style="left:62px;top:524px;" width="50" height="30" viewBox="0 0 50 30"><path d="M4.2 5.3H38.3L31.5 23.6H10.3V14.5H4.2Z" fill="#0a0a0a"/><path d="M6 7H17.8V22H11.9V12.8H6Z" fill="#dcdcdc"/><circle cx="23" cy="9.9" r="2.9" fill="#dcdcdc"/><path d="M29.2 7H35.8L29.9 22H23.3Z" fill="#dcdcdc"/></svg>
<div class="a" style="left:1618px;top:197px;width:122px;height:28px;background:#072c44;"></div>
<div class="a" style="left:1742px;top:197px;width:61px;height:28px;background:#072c44;"></div>
<div class="t" style="left:1625px;top:203.25px;font-size:14px;color:#e8e8e8;font-kerning:none;">Trade Dashboard</div>
<div class="t" style="left:1472.5px;width:600px;text-align:center;top:203.25px;font-size:14px;color:#e8e8e8;font-kerning:none;">Value</div>
<div class="a" style="left:1618px;top:227px;width:122px;height:28px;background:#072c44;"></div>
<div class="a" style="left:1742px;top:227px;width:61px;height:28px;background:#18406c;"></div>
<div class="t" style="left:1627px;top:233.25px;font-size:14px;color:#e8e8e8;font-kerning:none;">Leverage</div>
<div class="t" style="right:131px;top:233.25px;font-size:14px;color:#e8e8e8;text-align:right;font-kerning:none;">5</div>
<div class="a" style="left:1618px;top:257px;width:122px;height:28px;background:#072c44;"></div>
<div class="a" style="left:1742px;top:257px;width:61px;height:28px;background:#18406c;"></div>
<div class="t" style="left:1627px;top:263.25px;font-size:14px;color:#e8e8e8;font-kerning:none;">Entry</div>
<div class="t" style="right:131px;top:263.25px;font-size:14px;color:#e8e8e8;text-align:right;font-kerning:none;">0.32</div>
<div class="a" style="left:1618px;top:287px;width:122px;height:28px;background:#072c44;"></div>
<div class="a" style="left:1742px;top:287px;width:61px;height:28px;background:#d22d2d;"></div>
<div class="t" style="left:1627px;top:293.25px;font-size:14px;color:#e8e8e8;font-kerning:none;">Stoploss</div>
<div class="t" style="right:131px;top:293.25px;font-size:14px;color:#e8e8e8;text-align:right;font-kerning:none;">0.313</div>
<div class="a" style="left:1618px;top:317px;width:122px;height:28px;background:#072c44;"></div>
<div class="a" style="left:1742px;top:317px;width:61px;height:28px;background:#087a68;"></div>
<div class="t" style="left:1627px;top:323.25px;font-size:14px;color:#e8e8e8;font-kerning:none;">TP 1</div>
<div class="t" style="right:131px;top:323.25px;font-size:14px;color:#e8e8e8;text-align:right;font-kerning:none;">0.324</div>
<div class="a" style="left:1618px;top:347px;width:122px;height:28px;background:#072c44;"></div>
<div class="a" style="left:1742px;top:347px;width:61px;height:28px;background:#087a68;"></div>
<div class="t" style="left:1627px;top:353.25px;font-size:14px;color:#e8e8e8;font-kerning:none;">TP 2</div>
<div class="t" style="right:131px;top:353.25px;font-size:14px;color:#e8e8e8;text-align:right;font-kerning:none;">0.328</div>
<div class="a" style="left:1618px;top:377px;width:122px;height:28px;background:#072c44;"></div>
<div class="a" style="left:1742px;top:377px;width:61px;height:28px;background:#087a68;"></div>
<div class="t" style="left:1627px;top:383.25px;font-size:14px;color:#e8e8e8;font-kerning:none;">Final TP</div>
<div class="t" style="right:131px;top:383.25px;font-size:14px;color:#e8e8e8;text-align:right;font-kerning:none;">0.332</div>
<div class="a" style="left:1306px;top:497px;width:34px;height:26px;background:#072c44;"></div>
<div class="t" style="left:1311px;top:501.65px;font-size:14px;color:#e8e8e8;font-kerning:none;">Jan</div>
<div class="a" style="left:1341px;top:497px;width:36px;height:26px;background:#072c44;"></div>
<div class="t" style="left:1346px;top:501.65px;font-size:14px;color:#e8e8e8;font-kerning:none;">Feb</div>
<div class="a" style="left:1378px;top:497px;width:36px;height:26px;background:#072c44;"></div>
<div class="t" style="left:1383px;top:501.65px;font-size:14px;color:#e8e8e8;font-kerning:none;">Mar</div>
<div class="a" style="left:1415px;top:497px;width:34px;height:26px;background:#072c44;"></div>
<div class="t" style="left:1420px;top:501.65px;font-size:14px;color:#e8e8e8;font-kerning:none;">Apr</div>
<div class="a" style="left:1450px;top:497px;width:52px;height:26px;background:#072c44;"></div>
<div class="t" style="left:1455px;top:501.65px;font-size:14px;color:#e8e8e8;font-kerning:none;">May</div>
<div class="a" style="left:1450px;top:524px;width:52px;height:26px;background:#d22d2d;"></div>
<div class="t" style="left:1176.0px;width:600px;text-align:center;top:528.65px;font-size:14px;color:#e8e8e8;font-kerning:none;">-17.73</div>
<div class="a" style="left:1503px;top:497px;width:44px;height:26px;background:#072c44;"></div>
<div class="t" style="left:1508px;top:501.65px;font-size:14px;color:#e8e8e8;font-kerning:none;">Jun</div>
<div class="a" style="left:1503px;top:524px;width:44px;height:26px;background:#d22d2d;"></div>
<div class="t" style="left:1225.0px;width:600px;text-align:center;top:528.65px;font-size:14px;color:#e8e8e8;font-kerning:none;">-3.91</div>
<div class="a" style="left:1548px;top:497px;width:44px;height:26px;background:#072c44;"></div>
<div class="t" style="left:1553px;top:501.65px;font-size:14px;color:#e8e8e8;font-kerning:none;">Jul</div>
<div class="a" style="left:1548px;top:524px;width:44px;height:26px;background:#d22d2d;"></div>
<div class="t" style="left:1270.0px;width:600px;text-align:center;top:528.65px;font-size:14px;color:#e8e8e8;font-kerning:none;">-9.58</div>
<div class="a" style="left:1593px;top:497px;width:39px;height:26px;background:#072c44;"></div>
<div class="t" style="left:1598px;top:501.65px;font-size:14px;color:#e8e8e8;font-kerning:none;">Aug</div>
<div class="a" style="left:1593px;top:524px;width:39px;height:26px;background:#087a68;"></div>
<div class="t" style="left:1312.5px;width:600px;text-align:center;top:528.65px;font-size:14px;color:#e8e8e8;font-kerning:none;">7.95</div>
<div class="a" style="left:1633px;top:497px;width:39px;height:26px;background:#072c44;"></div>
<div class="t" style="left:1638px;top:501.65px;font-size:14px;color:#e8e8e8;font-kerning:none;">Sep</div>
<div class="a" style="left:1633px;top:524px;width:39px;height:26px;background:#087a68;"></div>
<div class="t" style="left:1352.5px;width:600px;text-align:center;top:528.65px;font-size:14px;color:#e8e8e8;font-kerning:none;">4.01</div>
<div class="a" style="left:1673px;top:497px;width:39px;height:26px;background:#072c44;"></div>
<div class="t" style="left:1678px;top:501.65px;font-size:14px;color:#e8e8e8;font-kerning:none;">Oct</div>
<div class="a" style="left:1673px;top:524px;width:39px;height:26px;background:#087a68;"></div>
<div class="t" style="left:1392.5px;width:600px;text-align:center;top:528.65px;font-size:14px;color:#e8e8e8;font-kerning:none;">7.54</div>
<div class="a" style="left:1713px;top:497px;width:52px;height:26px;background:#072c44;"></div>
<div class="t" style="left:1718px;top:501.65px;font-size:14px;color:#e8e8e8;font-kerning:none;">Nov</div>
<div class="a" style="left:1713px;top:524px;width:52px;height:26px;background:#d22d2d;"></div>
<div class="t" style="left:1439.0px;width:600px;text-align:center;top:528.65px;font-size:14px;color:#e8e8e8;font-kerning:none;">-10.84</div>
<div class="a" style="left:1766px;top:497px;width:37px;height:26px;background:#072c44;"></div>
<div class="t" style="left:1771px;top:501.65px;font-size:14px;color:#e8e8e8;font-kerning:none;">Dec</div>
<div class="a" style="left:1766px;top:524px;width:37px;height:26px;background:#d22d2d;"></div>
<div class="t" style="left:1484.5px;width:600px;text-align:center;top:528.65px;font-size:14px;color:#e8e8e8;font-kerning:none;">0</div>
<div class="a" style="left:145px;top:72px;width:1px;height:478px;background:rgba(255,255,255,0.03);"></div>
<div class="a" style="left:242px;top:72px;width:1px;height:478px;background:rgba(255,255,255,0.03);"></div>
<div class="a" style="left:339px;top:72px;width:1px;height:478px;background:rgba(255,255,255,0.03);"></div>
<div class="a" style="left:66px;top:86px;width:279px;height:1px;background:rgba(255,255,255,0.03);"></div>
<div class="a" style="left:66px;top:118px;width:279px;height:1px;background:rgba(255,255,255,0.03);"></div>
<div class="a" style="left:66px;top:149px;width:279px;height:1px;background:rgba(255,255,255,0.03);"></div>
<div class="a" style="left:66px;top:181px;width:279px;height:1px;background:rgba(255,255,255,0.03);"></div>
<div class="a" style="left:66px;top:212px;width:279px;height:1px;background:rgba(255,255,255,0.03);"></div>
<div class="a" style="left:66px;top:243px;width:279px;height:1px;background:rgba(255,255,255,0.03);"></div>
<div class="a" style="left:66px;top:275px;width:279px;height:1px;background:rgba(255,255,255,0.03);"></div>
<div class="a" style="left:66px;top:306px;width:279px;height:1px;background:rgba(255,255,255,0.03);"></div>
<div class="a" style="left:66px;top:338px;width:279px;height:1px;background:rgba(255,255,255,0.03);"></div>
<div class="a" style="left:66px;top:369px;width:279px;height:1px;background:rgba(255,255,255,0.03);"></div>
<div class="a" style="left:66px;top:401px;width:279px;height:1px;background:rgba(255,255,255,0.03);"></div>
<div class="a" style="left:66px;top:432px;width:279px;height:1px;background:rgba(255,255,255,0.03);"></div>
<div class="a" style="left:66px;top:464px;width:279px;height:1px;background:rgba(255,255,255,0.03);"></div>
<div class="a" style="left:66px;top:495px;width:279px;height:1px;background:rgba(255,255,255,0.03);"></div>
<div class="a" style="left:66px;top:527px;width:279px;height:1px;background:rgba(255,255,255,0.03);"></div>
<div class="a" style="left:1698px;top:197px;width:1px;height:208px;background:rgba(255,255,255,0.03);"></div>
<div class="a" style="left:1795px;top:197px;width:1px;height:208px;background:rgba(255,255,255,0.03);"></div>
<div class="a" style="left:1618px;top:212px;width:185px;height:1px;background:rgba(255,255,255,0.03);"></div>
<div class="a" style="left:1618px;top:243px;width:185px;height:1px;background:rgba(255,255,255,0.03);"></div>
<div class="a" style="left:1618px;top:275px;width:185px;height:1px;background:rgba(255,255,255,0.03);"></div>
<div class="a" style="left:1618px;top:306px;width:185px;height:1px;background:rgba(255,255,255,0.03);"></div>
<div class="a" style="left:1618px;top:338px;width:185px;height:1px;background:rgba(255,255,255,0.03);"></div>
<div class="a" style="left:1618px;top:369px;width:185px;height:1px;background:rgba(255,255,255,0.03);"></div>
<div class="a" style="left:1618px;top:401px;width:185px;height:1px;background:rgba(255,255,255,0.03);"></div>
<div class="a" style="left:1310px;top:497px;width:1px;height:53px;background:rgba(255,255,255,0.03);"></div>
<div class="a" style="left:1407px;top:497px;width:1px;height:53px;background:rgba(255,255,255,0.03);"></div>
<div class="a" style="left:1504px;top:497px;width:1px;height:53px;background:rgba(255,255,255,0.03);"></div>
<div class="a" style="left:1601px;top:497px;width:1px;height:53px;background:rgba(255,255,255,0.03);"></div>
<div class="a" style="left:1698px;top:497px;width:1px;height:53px;background:rgba(255,255,255,0.03);"></div>
<div class="a" style="left:1795px;top:497px;width:1px;height:53px;background:rgba(255,255,255,0.03);"></div>
<div class="a" style="left:1306px;top:527px;width:497px;height:1px;background:rgba(255,255,255,0.03);"></div>
<div class="a" style="left:56px;top:631px;width:1815px;height:449px;background:#0f0f0f;border-top-left-radius:4px;border-top-right-radius:4px;"></div>
<div class="a" style="left:162px;top:633px;width:114px;height:34px;background:#333333;border-radius:6px;"></div>
<div class="t" style="left:72.5px;top:643.15px;font-size:14px;color:#dbdbdb;">Pine Editor</div>
<div class="t" style="left:172.6px;top:643.15px;font-size:14px;color:#dbdbdb;">Strategy Tester</div>
<div class="t" style="left:298.8px;top:643.15px;font-size:14px;color:#dbdbdb;">Trading Panel</div>
<svg class="ic" style="left:1807px;top:648px;" width="18" height="12" viewBox="0 0 18 12"><path d="M2 8.5h13"/></svg>
<svg class="ic" style="left:1842px;top:640px;" width="20" height="20" viewBox="0 0 20 20"><path d="M2.5 8.5V4.6a2 2 0 0 1 2-2h11a2 2 0 0 1 2 2v3.9M17.5 12v3.2a2 2 0 0 1-2 2h-11a2 2 0 0 1-2-2V12"/></svg>
<div class="a" style="left:56px;top:669px;width:1815px;height:1px;background:#2e2e2e;"></div>
<div class="t" style="left:75.3px;top:686.90px;font-size:14px;color:#e8e8e8;font-weight:700;">Stiff Surge by @DaviddTech<span style="display:inline-block;width:7.4px;height:9px;border:1px solid #cfcfcf;margin:0 6px 0 5.7px;vertical-align:0px"></span>report</div>
<div class="a" style="left:325px;top:685px;width:20px;height:18px;border-radius:9px 0 0 9px;background:#3b2a10"></div>
<div class="a" style="left:345px;top:685px;width:20px;height:18px;border-radius:0 9px 9px 0;background:#301636"></div>
<svg class="" style="left:329px;top:687px;" width="16" height="16" viewBox="0 0 16 16"><path d="M6.9 0v14M9.5 2.6H3.9V11.7H9.5" stroke="#f59c0c" stroke-width="1.8" fill="none"/><circle cx="9" cy="7.1" r="2.6" stroke="#f59c0c" stroke-width="1.6" fill="#3b2a10"/><path d="M10.9 9l2.3 1.8" stroke="#f59c0c" stroke-width="1.6"/></svg>
<svg class="" style="left:348px;top:687px;" width="14" height="14" viewBox="0 0 14 14"><rect x="1.3" y="2.8" width="10.4" height="9.2" rx="1.2" stroke="#e040fb" stroke-width="1.8" fill="none"/><rect x="1.3" y="2.8" width="10.4" height="3.4" fill="#e040fb"/><path d="M3.4 1v2M9.6 1v2" stroke="#e040fb" stroke-width="1.6"/></svg>
<svg class="ic" style="left:369px;top:690px;" width="10" height="8" viewBox="0 0 10 8"><path d="M1.5 2l3.5 3.5 3.5-3.5" stroke-width="1.2"/></svg>
<svg class="ic" style="left:1641px;top:683px;" width="21" height="21" viewBox="0 0 21 21"><rect x="1.5" y="3.8" width="17" height="14.7" rx="1.5"/><path d="M6 1v3.8M14 1v3.8"/></svg>
<div class="t" style="left:1669.8px;top:687.15px;font-size:14px;color:#dbdbdb;">Sep 3, 2025 — Dec 2, 2025</div>
<svg class="ic" style="left:1846px;top:690px;" width="10" height="8" viewBox="0 0 10 8"><path d="M1.5 2l3.5 3.5 3.5-3.5" stroke-width="1.2"/></svg>
<div class="a" style="left:72px;top:722px;width:82px;height:28px;background:#f2f2f2;border-radius:14px;"></div>
<div class="t" style="left:84.1px;top:728.90px;font-size:14px;color:#0f0f0f;">Overview</div>
<div class="a" style="left:158px;top:722px;width:105px;height:28px;background:#2e2e2e;border-radius:14px;"></div>
<div class="t" style="left:170.4px;top:728.90px;font-size:14px;color:#dbdbdb;">Performance</div>
<div class="a" style="left:267px;top:722px;width:120px;height:28px;background:#2e2e2e;border-radius:14px;"></div>
<div class="t" style="left:279.1px;top:728.90px;font-size:14px;color:#dbdbdb;">Trades analysis</div>
<div class="a" style="left:392.6px;top:722px;width:171px;height:28px;background:#2e2e2e;border-radius:14px;"></div>
<div class="t" style="left:404.3px;top:728.90px;font-size:14px;color:#dbdbdb;">Risk/performance ratios</div>
<div class="a" style="left:568.3px;top:722px;width:104px;height:28px;background:#2e2e2e;border-radius:14px;"></div>
<div class="t" style="left:580px;top:728.90px;font-size:14px;color:#dbdbdb;">List of trades</div>
<div class="t" style="left:72.5px;top:771.05px;font-size:14px;color:#dbdbdb;font-weight:700;">Total P&amp;L</div>
<div class="a" style="left:143px;top:770.8px;width:14px;height:14px;border-radius:50%;background:#4a4a4a"></div>
<svg class="" style="left:143px;top:770.8px;" width="14" height="14" viewBox="0 0 14 14"><circle cx="7" cy="3.8" r="1.1" fill="#0f0f0f"/><path d="M7 6v5.5" stroke="#0f0f0f" stroke-width="2"/></svg>
<div class="t" style="left:72.5px;top:793.16px;font-size:16px;color:#f7525f;">−18,388.40<span style="font-size:11px;margin-left:3.5px">USD</span><span style="font-size:14px;margin-left:7.5px">−18.39%</span></div>
<div class="t" style="left:518.6px;top:771.05px;font-size:14px;color:#dbdbdb;font-weight:700;">Max equity drawdown</div>
<div class="a" style="left:671px;top:770.8px;width:14px;height:14px;border-radius:50%;background:#4a4a4a"></div>
<svg class="" style="left:671px;top:770.8px;" width="14" height="14" viewBox="0 0 14 14"><circle cx="7" cy="3.8" r="1.1" fill="#0f0f0f"/><path d="M7 6v5.5" stroke="#0f0f0f" stroke-width="2"/></svg>
<div class="t" style="left:518.6px;top:793.16px;font-size:16px;color:#dbdbdb;">22,691.36<span style="font-size:11px;margin-left:3.5px">USD</span><span style="font-size:14px;margin-left:7.5px">22.69%</span></div>
<div class="t" style="left:963.8px;top:771.05px;font-size:14px;color:#dbdbdb;font-weight:700;">Total trades</div>
<div class="a" style="left:1048.7px;top:770.8px;width:14px;height:14px;border-radius:50%;background:#4a4a4a"></div>
<svg class="" style="left:1048.7px;top:770.8px;" width="14" height="14" viewBox="0 0 14 14"><circle cx="7" cy="3.8" r="1.1" fill="#0f0f0f"/><path d="M7 6v5.5" stroke="#0f0f0f" stroke-width="2"/></svg>
<div class="t" style="left:963.8px;top:793.16px;font-size:16px;color:#dbdbdb;">84</div>
<div class="t" style="left:1342.6px;top:771.05px;font-size:14px;color:#dbdbdb;font-weight:700;">Profitable trades</div>
<div class="a" style="left:1459.6px;top:770.8px;width:14px;height:14px;border-radius:50%;background:#4a4a4a"></div>
<svg class="" style="left:1459.6px;top:770.8px;" width="14" height="14" viewBox="0 0 14 14"><circle cx="7" cy="3.8" r="1.1" fill="#0f0f0f"/><path d="M7 6v5.5" stroke="#0f0f0f" stroke-width="2"/></svg>
<div class="t" style="left:1342.6px;top:793.16px;font-size:16px;color:#dbdbdb;">70.24%<span style="font-size:11.5px"> 59/84</span></div>
<div class="t" style="left:1752.5px;top:771.05px;font-size:14px;color:#dbdbdb;font-weight:700;">Profit factor</div>
<div class="a" style="left:1838.9px;top:770.8px;width:14px;height:14px;border-radius:50%;background:#4a4a4a"></div>
<svg class="" style="left:1838.9px;top:770.8px;" width="14" height="14" viewBox="0 0 14 14"><circle cx="7" cy="3.8" r="1.1" fill="#0f0f0f"/><path d="M7 6v5.5" stroke="#0f0f0f" stroke-width="2"/></svg>
<div class="t" style="left:1752.5px;top:793.16px;font-size:16px;color:#dbdbdb;">0.741</div>
<svg class="" style="left:0;top:0" width="1920" height="1080" viewBox="0 0 1920 1080"><path d="M81,863 L81,892.0 L81.4,892.0 L101.4,926.7 L122.5,933.8 L142.3,933.0 L162.5,931.0 L182.3,928.3 L203.4,927.7 L223.3,925.6 L243.3,927.7 L263.3,926.4 L284.4,923.8 L304.2,919.8 L324.2,925.3 L345.3,921.0 L365.5,911.6 L385.5,922.8 L405.5,922.8 L426.4,922.0 L446.6,921.2 L466.6,918.9 L486.4,913.1 L507.2,904.2 L527.3,930.3 L547.3,978.0 L567.3,978.0 L588.3,977.2 L608.3,976.7 L628.3,981.6 L648.1,975.6 L669.4,962.3 L689.4,942.3 L709.4,938.1 L730.3,928.8 L750.2,914.7 L770.3,914.2 L790.3,913.4 L811.2,911.9 L831.4,918.9 L851.4,918.9 L871.2,918.1 L892.3,917.3 L912.2,916.7 L932.3,918.6 L952.3,912.7 L973.1,899.8 L993.4,912.3 L1013.4,907.7 L1033.3,897.0 L1054.2,880.8 L1074.4,879.5 L1094.4,884.5 L1114.4,896.4 L1135.2,955.3 L1155.5,978.8 L1175.3,974.5 L1196.4,965.8 L1216.4,951.9 L1236.6,973.6 L1256.4,968.9 L1277.3,989.7 L1297.3,983.9 L1317.3,970.9 L1337.3,950.9 L1358.3,950.6 L1378.3,952.5 L1398.3,950.9 L1418.4,957.2 L1439.4,956.9 L1459.4,955.6 L1479.5,956.6 L1499.5,950.6 L1520.2,937.7 L1540.2,917.8 L1560.5,951.1 L1581.1,944.8 L1601.4,970.9 L1621.2,969.4 L1641.2,966.2 L1662.3,968.9 L1682.3,967.8 L1702.3,965.0 L1722.5,960.5 L1743.1,957.2 L1763.4,970.9 L1763,970.9 L1763,863 Z" fill="#1c1616"/><polyline points="81.4,892.0 101.4,926.7 122.5,933.8 142.3,933.0 162.5,931.0 182.3,928.3 203.4,927.7 223.3,925.6 243.3,927.7 263.3,926.4 284.4,923.8 304.2,919.8 324.2,925.3 345.3,921.0 365.5,911.6 385.5,922.8 405.5,922.8 426.4,922.0 446.6,921.2 466.6,918.9 486.4,913.1 507.2,904.2 527.3,930.3 547.3,978.0 567.3,978.0 588.3,977.2 608.3,976.7 628.3,981.6 648.1,975.6 669.4,962.3 689.4,942.3 709.4,938.1 730.3,928.8 750.2,914.7 770.3,914.2 790.3,913.4 811.2,911.9 831.4,918.9 851.4,918.9 871.2,918.1 892.3,917.3 912.2,916.7 932.3,918.6 952.3,912.7 973.1,899.8 993.4,912.3 1013.4,907.7 1033.3,897.0 1054.2,880.8 1074.4,879.5 1094.4,884.5 1114.4,896.4 1135.2,955.3 1155.5,978.8 1175.3,974.5 1196.4,965.8 1216.4,951.9 1236.6,973.6 1256.4,968.9 1277.3,989.7 1297.3,983.9 1317.3,970.9 1337.3,950.9 1358.3,950.6 1378.3,952.5 1398.3,950.9 1418.4,957.2 1439.4,956.9 1459.4,955.6 1479.5,956.6 1499.5,950.6 1520.2,937.7 1540.2,917.8 1560.5,951.1 1581.1,944.8 1601.4,970.9 1621.2,969.4 1641.2,966.2 1662.3,968.9 1682.3,967.8 1702.3,965.0 1722.5,960.5 1743.1,957.2 1763.4,970.9" fill="none" stroke="#f23645" stroke-width="2" stroke-linejoin="round"/><circle cx="81.4" cy="892.0" r="4.3" fill="#f23645"/><circle cx="101.4" cy="926.7" r="4.3" fill="#f23645"/><circle cx="122.5" cy="933.8" r="4.3" fill="#f23645"/><circle cx="142.3" cy="933.0" r="4.3" fill="#f23645"/><circle cx="162.5" cy="931.0" r="4.3" fill="#f23645"/><circle cx="182.3" cy="928.3" r="4.3" fill="#f23645"/><circle cx="203.4" cy="927.7" r="4.3" fill="#f23645"/><circle cx="223.3" cy="925.6" r="4.3" fill="#f23645"/><circle cx="243.3" cy="927.7" r="4.3" fill="#f23645"/><circle cx="263.3" cy="926.4" r="4.3" fill="#f23645"/><circle cx="284.4" cy="923.8" r="4.3" fill="#f23645"/><circle cx="304.2" cy="919.8" r="4.3" fill="#f23645"/><circle cx="324.2" cy="925.3" r="4.3" fill="#f23645"/><circle cx="345.3" cy="921.0" r="4.3" fill="#f23645"/><circle cx="365.5" cy="911.6" r="4.3" fill="#f23645"/><circle cx="385.5" cy="922.8" r="4.3" fill="#f23645"/><circle cx="405.5" cy="922.8" r="4.3" fill="#f23645"/><circle cx="426.4" cy="922.0" r="4.3" fill="#f23645"/><circle cx="446.6" cy="921.2" r="4.3" fill="#f23645"/><circle cx="466.6" cy="918.9" r="4.3" fill="#f23645"/><circle cx="486.4" cy="913.1" r="4.3" fill="#f23645"/><circle cx="507.2" cy="904.2" r="4.3" fill="#f23645"/><circle cx="527.3" cy="930.3" r="4.3" fill="#f23645"/><circle cx="547.3" cy="978.0" r="4.3" fill="#f23645"/><circle cx="567.3" cy="978.0" r="4.3" fill="#f23645"/><circle cx="588.3" cy="977.2" r="4.3" fill="#f23645"/><circle cx="608.3" cy="976.7" r="4.3" fill="#f23645"/><circle cx="628.3" cy="981.6" r="4.3" fill="#f23645"/><circle cx="648.1" cy="975.6" r="4.3" fill="#f23645"/><circle cx="669.4" cy="962.3" r="4.3" fill="#f23645"/><circle cx="689.4" cy="942.3" r="4.3" fill="#f23645"/><circle cx="709.4" cy="938.1" r="4.3" fill="#f23645"/><circle cx="730.3" cy="928.8" r="4.3" fill="#f23645"/><circle cx="750.2" cy="914.7" r="4.3" fill="#f23645"/><circle cx="770.3" cy="914.2" r="4.3" fill="#f23645"/><circle cx="790.3" cy="913.4" r="4.3" fill="#f23645"/><circle cx="811.2" cy="911.9" r="4.3" fill="#f23645"/><circle cx="831.4" cy="918.9" r="4.3" fill="#f23645"/><circle cx="851.4" cy="918.9" r="4.3" fill="#f23645"/><circle cx="871.2" cy="918.1" r="4.3" fill="#f23645"/><circle cx="892.3" cy="917.3" r="4.3" fill="#f23645"/><circle cx="912.2" cy="916.7" r="4.3" fill="#f23645"/><circle cx="932.3" cy="918.6" r="4.3" fill="#f23645"/><circle cx="952.3" cy="912.7" r="4.3" fill="#f23645"/><circle cx="973.1" cy="899.8" r="4.3" fill="#f23645"/><circle cx="993.4" cy="912.3" r="4.3" fill="#f23645"/><circle cx="1013.4" cy="907.7" r="4.3" fill="#f23645"/><circle cx="1033.3" cy="897.0" r="4.3" fill="#f23645"/><circle cx="1054.2" cy="880.8" r="4.3" fill="#f23645"/><circle cx="1074.4" cy="879.5" r="4.3" fill="#f23645"/><circle cx="1094.4" cy="884.5" r="4.3" fill="#f23645"/><circle cx="1114.4" cy="896.4" r="4.3" fill="#f23645"/><circle cx="1135.2" cy="955.3" r="4.3" fill="#f23645"/><circle cx="1155.5" cy="978.8" r="4.3" fill="#f23645"/><circle cx="1175.3" cy="974.5" r="4.3" fill="#f23645"/><circle cx="1196.4" cy="965.8" r="4.3" fill="#f23645"/><circle cx="1216.4" cy="951.9" r="4.3" fill="#f23645"/><circle cx="1236.6" cy="973.6" r="4.3" fill="#f23645"/><circle cx="1256.4" cy="968.9" r="4.3" fill="#f23645"/><circle cx="1277.3" cy="989.7" r="4.3" fill="#f23645"/><circle cx="1297.3" cy="983.9" r="4.3" fill="#f23645"/><circle cx="1317.3" cy="970.9" r="4.3" fill="#f23645"/><circle cx="1337.3" cy="950.9" r="4.3" fill="#f23645"/><circle cx="1358.3" cy="950.6" r="4.3" fill="#f23645"/><circle cx="1378.3" cy="952.5" r="4.3" fill="#f23645"/><circle cx="1398.3" cy="950.9" r="4.3" fill="#f23645"/><circle cx="1418.4" cy="957.2" r="4.3" fill="#f23645"/><circle cx="1439.4" cy="956.9" r="4.3" fill="#f23645"/><circle cx="1459.4" cy="955.6" r="4.3" fill="#f23645"/><circle cx="1479.5" cy="956.6" r="4.3" fill="#f23645"/><circle cx="1499.5" cy="950.6" r="4.3" fill="#f23645"/><circle cx="1520.2" cy="937.7" r="4.3" fill="#f23645"/><circle cx="1540.2" cy="917.8" r="4.3" fill="#f23645"/><circle cx="1560.5" cy="951.1" r="4.3" fill="#f23645"/><circle cx="1581.1" cy="944.8" r="4.3" fill="#f23645"/><circle cx="1601.4" cy="970.9" r="4.3" fill="#f23645"/><circle cx="1621.2" cy="969.4" r="4.3" fill="#f23645"/><circle cx="1641.2" cy="966.2" r="4.3" fill="#f23645"/><circle cx="1662.3" cy="968.9" r="4.3" fill="#f23645"/><circle cx="1682.3" cy="967.8" r="4.3" fill="#f23645"/><circle cx="1702.3" cy="965.0" r="4.3" fill="#f23645"/><circle cx="1722.5" cy="960.5" r="4.3" fill="#f23645"/><circle cx="1763.4" cy="970.9" r="4.3" fill="#f23645"/><rect x="81" y="995" width="547.3" height="4" fill="#80222a"/><rect x="628.3" y="995" width="446.1" height="4" fill="#0b5448"/><rect x="1074.4" y="995" width="202.9" height="4" fill="#80222a"/><rect x="1277.3" y="995" width="485.7" height="4" fill="#0b5448"/><rect x="1743" y="839" width="1" height="162" fill="#4a4a4a"/><circle cx="1743.1" cy="957.2" r="5.8" fill="#f23645" stroke="#000" stroke-width="2.5"/></svg>
<div class="t" style="left:1783.75px;top:857.84px;font-size:12px;color:#b8b8b8;">0.00%</div>
<div class="t" style="left:1784.7px;top:915.84px;font-size:12px;color:#b8b8b8;">−10.00%</div>
<div class="t" style="left:1784.7px;top:974.84px;font-size:12px;color:#b8b8b8;">−20.00%</div>
<div class="a" style="left:1781px;top:962px;width:61px;height:17px;background:#089981;border-radius:3px;"></div>
<div class="t" style="left:1514px;width:600px;text-align:center;top:965.14px;font-size:12px;color:#0f0f0f;">−18.39%</div>
<div class="t" style="left:-219.1px;width:600px;text-align:center;top:1008.74px;font-size:12px;color:#b8b8b8;">5</div>
<div class="t" style="left:-137.5px;width:600px;text-align:center;top:1008.74px;font-size:12px;color:#b8b8b8;">10</div>
<div class="t" style="left:-56.900000000000006px;width:600px;text-align:center;top:1008.74px;font-size:12px;color:#b8b8b8;">12</div>
<div class="t" style="left:23.69999999999999px;width:600px;text-align:center;top:1008.74px;font-size:12px;color:#b8b8b8;">17</div>
<div class="t" style="left:105px;width:600px;text-align:center;top:1008.74px;font-size:12px;color:#b8b8b8;">23</div>
<div class="t" style="left:247.10000000000002px;width:600px;text-align:center;top:1008.74px;font-size:12px;color:#b8b8b8;font-weight:700;">Oct</div>
<div class="t" style="left:327.70000000000005px;width:600px;text-align:center;top:1008.74px;font-size:12px;color:#b8b8b8;">4</div>
<div class="t" style="left:409px;width:600px;text-align:center;top:1008.74px;font-size:12px;color:#b8b8b8;">10</div>
<div class="t" style="left:510px;width:600px;text-align:center;top:1008.74px;font-size:12px;color:#b8b8b8;">17</div>
<div class="t" style="left:611px;width:600px;text-align:center;top:1008.74px;font-size:12px;color:#b8b8b8;">20</div>
<div class="t" style="left:692px;width:600px;text-align:center;top:1008.74px;font-size:12px;color:#b8b8b8;">23</div>
<div class="t" style="left:834px;width:600px;text-align:center;top:1008.74px;font-size:12px;color:#b8b8b8;font-weight:700;">Nov</div>
<div class="t" style="left:936px;width:600px;text-align:center;top:1008.74px;font-size:12px;color:#b8b8b8;">6</div>
<div class="t" style="left:1057.5px;width:600px;text-align:center;top:1008.74px;font-size:12px;color:#b8b8b8;">7</div>
<div class="t" style="left:1138.75px;width:600px;text-align:center;top:1008.74px;font-size:12px;color:#b8b8b8;">10</div>
<div class="t" style="left:1240px;width:600px;text-align:center;top:1008.74px;font-size:12px;color:#b8b8b8;">13</div>
<div class="t" style="left:1320.6px;width:600px;text-align:center;top:1008.74px;font-size:12px;color:#b8b8b8;">19</div>
<div class="t" style="left:1422.2px;width:600px;text-align:center;top:1008.74px;font-size:12px;color:#b8b8b8;">26</div>
<div class="a" style="left:1529px;top:828px;width:200px;height:75px;background:#3d3d3d;border-radius:5px;"></div>
<div class="t" style="left:1329px;width:600px;text-align:center;top:836.24px;font-size:12px;color:#a8a8a8;">Trade #196 Long</div>
<div class="a" style="left:1542.6px;top:862px;width:8px;height:8px;border-radius:50%;background:#f23645"></div>
<div class="t" style="left:1555px;top:859.84px;font-size:12px;color:#ffffff;font-weight:700;">Cumulative P&amp;L</div>
<div class="t" style="right:205.5999999999999px;top:859.84px;font-size:12px;color:#ffffff;text-align:right;font-weight:700;">−21.39%</div>
<div class="t" style="left:1329px;width:600px;text-align:center;top:883.84px;font-size:12px;color:#a8a8a8;">Mon, Nov 24, 2025, 12:00</div>
<div class="a" style="left:72px;top:1048px;width:18px;height:18px;border:1px solid #dbdbdb;border-radius:3px"></div>
<div class="t" style="left:98px;top:1049.65px;font-size:14px;color:#dbdbdb;">Buy &amp; hold</div>
<svg class="ic" style="left:174px;top:1050px;" width="20" height="12" viewBox="0 0 20 12"><path d="M1.1 10.8L6.8 4.6 12 9.3l6.8-6.8" stroke-width="1.1"/></svg>
<div class="a" style="left:230px;top:1048px;width:18px;height:18px;border:1px solid #dbdbdb;border-radius:3px"></div>
<div class="t" style="left:255.9px;top:1049.65px;font-size:14px;color:#dbdbdb;">Trades run-up &amp; drawdown</div>
<svg class="ic" style="left:432px;top:1048px;" width="20" height="17" viewBox="0 0 20 17"><path d="M1.9 15.2V10.7H5.3V15.2ZM5.3 15.2V4.8H9.3V15.2M9.3 15.2V8.4H13.4V15.2M13.4 15.2V1.7H17.1V15.2ZM1.9 15.2H17.1"/></svg>
<div class="t" style="left:1690.3px;top:1050.35px;font-size:14px;color:#dbdbdb;">Absolute</div>
<div class="a" style="left:1760px;top:1043px;width:91px;height:28px;background:#2e2e2e;border-radius:6px;"></div>
<div class="t" style="left:1767.5px;top:1050.35px;font-size:14px;color:#ffffff;font-weight:700;">Percentage</div>
</body></html>
